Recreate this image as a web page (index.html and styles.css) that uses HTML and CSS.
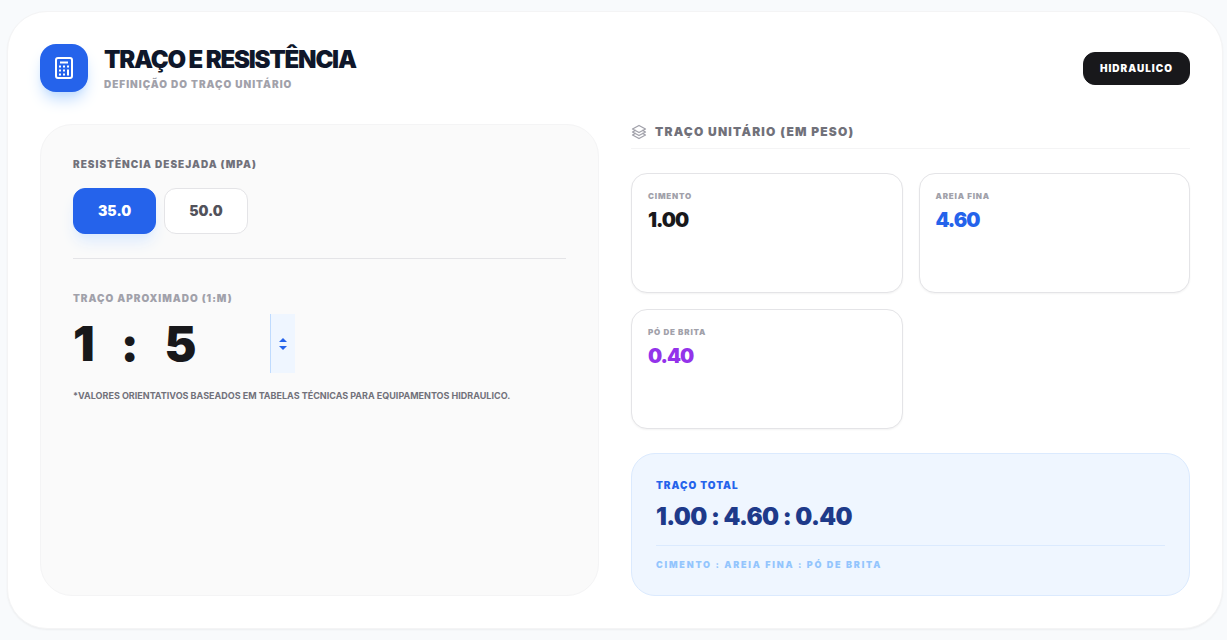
FILE: index.html
```html
<!DOCTYPE html>
<html lang="pt-BR">
<head>
<meta charset="utf-8">
<meta name="viewport" content="width=device-width, initial-scale=1">
<title>Traço e Resistência</title>
<link rel="stylesheet" href="styles.css">
</head>
<body>
<main class="card">
  <header class="header">
    <div class="brand">
      <svg viewBox="0 0 24 24" width="24" height="24" fill="none" stroke="currentColor" stroke-width="2" aria-hidden="true">
        <rect x="4" y="2" width="16" height="20" rx="2"/>
        <path d="M8 6.500h8"/>
        <path d="M7 10.500h2m2 0h2m2 0h2M7 14.500h2m2 0h2M7 18.500h2m2 0h2M16 13.500v6"/>
      </svg>
    </div>
    <div class="heading">
      <h1 class="title">TRAÇO E RESISTÊNCIA</h1>
      <p class="subtitle">DEFINIÇÃO DO TRAÇO UNITÁRIO</p>
    </div>
    <span class="tag">HIDRAULICO</span>
  </header>
  <div class="columns">
    <section class="settings">
      <h2 class="label label-dark" id="strength">RESISTÊNCIA DESEJADA (MPA)</h2>
      <div class="options" role="group" aria-labelledby="strength">
        <button class="option option-active" type="button" aria-pressed="true">35.0</button>
        <button class="option" type="button" aria-pressed="false">50.0</button>
      </div>
      <div class="ratio">
        <label class="label" for="ratio">TRAÇO APROXIMADO (1:M)</label>
        <div class="ratio-row">
          <span>1</span>
          <span>:</span>
          <div class="stepper">
            <input class="ratio-input" id="ratio" type="text" inputmode="numeric" value="5">
            <button class="spin" type="button" aria-label="Ajustar valor">
              <svg viewBox="0 0 8 12" width="8" height="12" fill="currentColor" aria-hidden="true"><path d="M4 0 8 4H0zM0 8h8l-4 4z"/></svg>
            </button>
          </div>
        </div>
        <p class="note">*VALORES ORIENTATIVOS BASEADOS EM TABELAS TÉCNICAS PARA EQUIPAMENTOS HIDRAULICO.</p>
      </div>
    </section>
    <section class="results">
      <h2 class="section-title">
        <svg viewBox="0 0 24 24" width="16" height="16" fill="none" stroke="currentColor" stroke-width="2" stroke-linecap="round" stroke-linejoin="round" aria-hidden="true">
          <path d="M6.429 9.750 2.250 12l4.179 2.250m0-4.500 5.571 3 5.571-3m-11.142 0L2.250 7.500 12 2.250l9.750 5.250-4.179 2.250m0 0L21.750 12l-4.179 2.250m0 0 4.179 2.250L12 21.750 2.250 16.500l4.179-2.250m11.142 0-5.571 3-5.571-3"/>
        </svg>
        TRAÇO UNITÁRIO (EM PESO)
      </h2>
      <div class="materials">
        <article class="material"><h3 class="material-name">CIMENTO</h3><p class="material-value">1.00</p></article>
        <article class="material"><h3 class="material-name">AREIA FINA</h3><p class="material-value blue">4.60</p></article>
        <article class="material"><h3 class="material-name">PÓ DE BRITA</h3><p class="material-value purple">0.40</p></article>
      </div>
      <div class="total">
        <h3 class="label total-label">TRAÇO TOTAL</h3>
        <p class="total-value">1.00 : 4.60 : 0.40</p>
        <p class="total-legend">CIMENTO : AREIA FINA : PÓ DE BRITA</p>
      </div>
    </section>
  </div>
</main>
</body>
</html>
```
FILE: styles.css
```css
* { box-sizing: border-box; margin: 0; padding: 0; }

body {
  padding: 11px 4px 11px 7px;
  background: #f8fafc;
  color: #18181b;
  font-family: Inter, "Liberation Sans", sans-serif;
}

button, input { font: inherit; color: inherit; border: 0; background: none; }

.card {
  padding: 32px;
  border: 1px solid #f4f4f5;
  border-radius: 40px;
  background: #fff;
  box-shadow: 0 1px 2px rgba(0, 0, 0, 0.05);
}

.header { display: flex; align-items: center; gap: 16px; margin-bottom: 32px; }

.brand {
  display: grid;
  place-items: center;
  width: 48px;
  height: 48px;
  border-radius: 16px;
  background: #2563eb;
  color: #fff;
  box-shadow: 0 10px 15px -3px #bfdbfe, 0 4px 6px -4px #bfdbfe;
}

.heading { flex: 1; }

.title {
  color: #0f172a;
  font-size: 24px;
  font-weight: 900;
  line-height: 32px;
  letter-spacing: -0.05em;
}

.subtitle {
  color: #a1a1aa;
  font-size: 10px;
  font-weight: 900;
  line-height: 16px;
  letter-spacing: 0.1em;
}

.tag {
  padding: 8px 16px;
  border: 1px solid #18181b;
  border-radius: 12px;
  background: #18181b;
  color: #fff;
  font-size: 10px;
  font-weight: 900;
  line-height: 15px;
  letter-spacing: 0.1em;
}

.columns { display: grid; grid-template-columns: 1fr 1fr; gap: 32px; }

.settings {
  padding: 32px;
  border: 1px solid #f4f4f5;
  border-radius: 32px;
  background: #fafafa;
}

.label {
  display: block;
  color: #a1a1aa;
  font-size: 10px;
  font-weight: 900;
  line-height: 15px;
  letter-spacing: 0.1em;
}

.label-dark { color: #71717a; }

.options { display: flex; gap: 8px; margin-top: 16px; }

.option {
  padding: 12px 24px;
  border: 1px solid #e4e4e7;
  border-radius: 12px;
  background: #fff;
  color: #52525b;
  font-size: 14px;
  font-weight: 900;
  line-height: 20px;
}

.option-active {
  border-color: #2563eb;
  background: #2563eb;
  color: #fff;
  box-shadow: 0 10px 15px -3px #dbeafe, 0 4px 6px -4px #dbeafe;
}

.ratio { margin-top: 24px; padding-top: 32px; border-top: 1px solid #e4e4e7; }

.ratio-row {
  display: flex;
  align-items: center;
  gap: 26px;
  margin-top: 8px;
  font-size: 48px;
  font-weight: 900;
  line-height: 59px;
}

.stepper { display: flex; width: 130px; }

.ratio-input { flex: 1; min-width: 0; height: 59px; }

.spin {
  display: grid;
  place-items: center;
  width: 25px;
  border-left: 1px solid #bfdbfe;
  background: #eff6ff;
  color: #2563eb;
}

.note {
  margin-top: 16px;
  color: #71717a;
  font-size: 9px;
  font-weight: 700;
  line-height: 14px;
}

.section-title {
  display: flex;
  align-items: center;
  gap: 8px;
  margin-bottom: 24px;
  padding-bottom: 8px;
  border-bottom: 1px solid #f4f4f5;
  color: #71717a;
  font-size: 12px;
  font-weight: 900;
  line-height: 16px;
  letter-spacing: 0.1em;
}

.section-title svg { color: #a1a1aa; }

.materials { display: grid; grid-template-columns: 1fr 1fr; grid-auto-rows: 120px; gap: 16px; }

.material {
  padding: 16px;
  border: 1px solid #e4e4e7;
  border-radius: 16px;
  background: #fff;
  box-shadow: 0 1px 2px rgba(0, 0, 0, 0.05);
}

.material-name {
  color: #a1a1aa;
  font-size: 8px;
  font-weight: 900;
  line-height: 12px;
  letter-spacing: 0.1em;
}

.material-value {
  margin-top: 4px;
  font-size: 20px;
  font-weight: 900;
  line-height: 28px;
  letter-spacing: -0.05em;
}

.blue { color: #2563eb; }
.purple { color: #9333ea; }

.total {
  margin-top: 24px;
  padding: 24px;
  border: 1px solid #dbeafe;
  border-radius: 24px;
  background: #eff6ff;
}

.total-label { color: #2563eb; }

.total-value {
  margin-top: 8px;
  color: #1e3a8a;
  font-size: 24px;
  font-weight: 900;
  line-height: 32px;
  letter-spacing: -0.025em;
}

.total-legend {
  margin-top: 12px;
  padding-top: 12px;
  border-top: 1px solid #dbeafe;
  color: #93c5fd;
  font-size: 9px;
  font-weight: 900;
  line-height: 13px;
  letter-spacing: 0.2em;
}
```
